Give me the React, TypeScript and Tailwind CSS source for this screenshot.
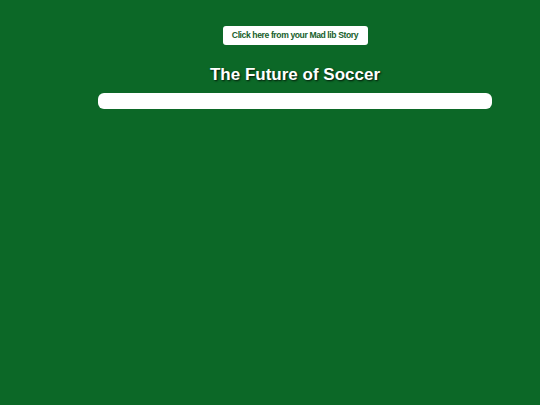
export default function App() {
  return (
    <div className="min-h-[405px] w-full bg-[#0c6827] font-['Liberation_Sans',Arial,sans-serif]">
      <div className="ml-[98px] w-[394px] flex flex-col items-center pt-[26px]">
        <button className="h-[19px] w-[145px] rounded-[3px] bg-white text-[8.6px] font-bold leading-none tracking-[-0.4px] text-[#17602b]">
          Click here from your Mad lib Story
        </button>
        <h1 className="mt-[20px] text-[17px] font-bold leading-[20px] text-white [text-shadow:1px_1px_2px_rgba(0,0,0,0.8)]">
          The Future of Soccer
        </h1>
        <div className="mt-[8px] h-[16px] w-full rounded-[6px] bg-white" />
      </div>
    </div>
  );
}
